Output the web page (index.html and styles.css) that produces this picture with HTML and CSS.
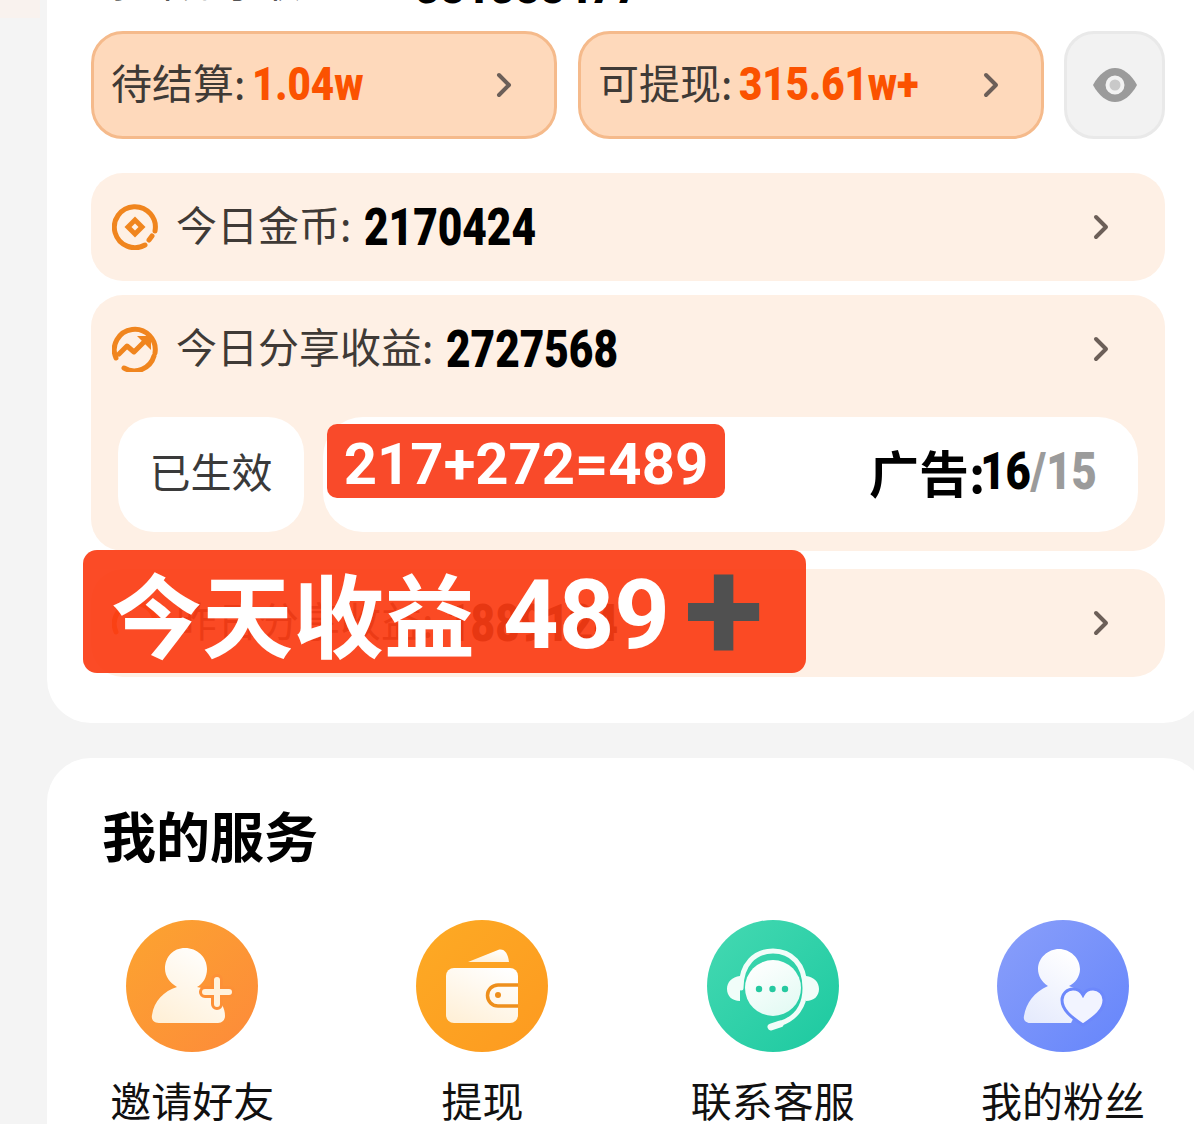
FILE: index.html
```html
<!DOCTYPE html>
<html lang="zh">
<head>
<meta charset="utf-8">
<title>我的服务</title>
<link rel="stylesheet" href="styles.css">
</head>
<body>
<div class="corner-tint"></div>
<section class="card earnings">
  <div class="total-line"><span class="total-label">累计分享收益:</span><span class="num total-num">381388477</span></div>
  <div class="pills">
    <div class="pill"><span class="pill-label">待结算:</span><span class="num pill-num">1.04w</span><svg class="chev" viewBox="0 0 16 26"><path d="M3 3l10 10L3 23"/></svg></div>
    <div class="pill"><span class="pill-label">可提现:</span><span class="num pill-num">315.61w+</span><svg class="chev" viewBox="0 0 16 26"><path d="M3 3l10 10L3 23"/></svg></div>
    <div class="eye-btn"><svg class="eye" viewBox="0 0 46 36"><path class="eye-shape" d="M1 18C7 7 15 1 23 1s16 6 22 17c-6 11-14 17-22 17S7 29 1 18z"/><circle class="eye-ring" cx="23" cy="18" r="7.500"/></svg></div>
  </div>
  <div class="row">
    <div class="row-head">
      <svg class="row-icon" viewBox="0 0 46 46"><path class="ring" d="M33 41A20.500 20.500 0 1 1 43 27"/><path class="ring" d="M40 32l-3 4"/><path class="diamond" d="M23 12.500L33.500 23 23 33.500 12.500 23z"/><path class="diamond-hole" d="M23 19.500l3.500 3.500-3.500 3.500-3.500-3.500z"/></svg>
      <span class="row-label">今日金币:</span><span class="num row-num">2170424</span>
      <svg class="chev" viewBox="0 0 16 26"><path d="M3 3l10 10L3 23"/></svg>
    </div>
  </div>
  <div class="row row-share">
    <div class="row-head">
      <svg class="row-icon" viewBox="0 0 46 46"><path class="ring" d="M4 32A20.500 20.500 0 1 1 43 27"/><path class="ring" d="M42 30A20.500 20.500 0 0 1 12 42"/><path class="trend" d="M7 28l8-8 7 6 10-10"/><path class="arrow" d="M25 10h14v14z"/></svg>
      <span class="row-label">今日分享收益:</span><span class="num row-num">2727568</span>
      <svg class="chev" viewBox="0 0 16 26"><path d="M3 3l10 10L3 23"/></svg>
    </div>
    <div class="status-line">
      <div class="status">已生效</div>
      <div class="ads">
        <span class="sum-tag">217+272=489</span>
        <span class="ads-label">广告:</span><span class="num ads-count"><span class="ads-num">16</span><span class="ads-total">/15</span></span>
      </div>
    </div>
  </div>
  <div class="row">
    <div class="row-head">
      <svg class="row-icon" viewBox="0 0 46 46"><path class="ring" d="M4 32A20.500 20.500 0 1 1 43 27"/></svg>
      <span class="row-label">昨日分享收益:</span><span class="num row-num">1889124</span>
      <svg class="chev" viewBox="0 0 16 26"><path d="M3 3l10 10L3 23"/></svg>
    </div>
  </div>
</section>
<div class="banner"><span class="banner-text">今天收益</span><span class="banner-num">489</span><span class="banner-plus">+</span></div>
<section class="card services">
  <h2 class="services-title">我的服务</h2>
  <div class="service-grid">
    <div class="service">
      <svg class="service-icon" viewBox="0 0 132 132">
        <defs>
          <linearGradient id="gOrange" x1="0" y1="0" x2="1" y2="1"><stop offset="0" stop-color="#fca430"/><stop offset="1" stop-color="#fd8a3a"/></linearGradient>
          <linearGradient id="gAmber" x1="0" y1="0" x2="1" y2="1"><stop offset="0" stop-color="#fdaa24"/><stop offset="1" stop-color="#fd9a20"/></linearGradient>
          <linearGradient id="gGreen" x1="0" y1="0" x2="1" y2="1"><stop offset="0" stop-color="#45d9b2"/><stop offset="1" stop-color="#1cc9a0"/></linearGradient>
          <linearGradient id="gBlue" x1="0" y1="0" x2="1" y2="1"><stop offset="0" stop-color="#8a9ffa"/><stop offset="1" stop-color="#6585fb"/></linearGradient>
          <linearGradient id="gCream" x1="0.8" y1="0" x2="0.2" y2="1"><stop offset="0" stop-color="#ffffff"/><stop offset="1" stop-color="#fff0d8"/></linearGradient>
          <linearGradient id="gMint" x1="0.2" y1="0" x2="0.8" y2="1"><stop offset="0" stop-color="#ffffff"/><stop offset="1" stop-color="#e2faf3"/></linearGradient>
          <linearGradient id="gIce" x1="0.7" y1="0" x2="0.2" y2="1"><stop offset="0" stop-color="#ffffff"/><stop offset="1" stop-color="#e6ebfd"/></linearGradient>
        </defs>
        <circle cx="66" cy="66" r="66" fill="url(#gOrange)"/>
        <path fill="url(#gCream)" d="M59 28c12 0 22 9 22 21 0 8-4 15-10 18 6 1 11 4 16 8 8 6 12 13 12 21 0 4-3 7-7 7H33c-5 0-8-3-7-8 2-14 12-24 25-28-7-4-12-11-12-18 0-12 8-21 20-21z"/>
        <path class="plus-cut" d="M91 60v24M79 72h24"/>
        <path class="plus-add" d="M91 60v24M79 72h24"/>
      </svg>
      <span class="service-name">邀请好友</span>
    </div>
    <div class="service">
      <svg class="service-icon" viewBox="0 0 132 132">
        <circle cx="66" cy="66" r="66" fill="url(#gAmber)"/>
        <path fill="url(#gCream)" d="M52 42l30-12c6-2 10 3 11 12z"/>
        <rect x="30" y="48" width="72" height="55" rx="8" fill="url(#gCream)"/>
        <path class="clasp" d="M102 65H82a10.500 10.500 0 0 0 0 21h20"/>
        <circle cx="82" cy="75" r="3" fill="#ee8f1c"/>
      </svg>
      <span class="service-name">提现</span>
    </div>
    <div class="service">
      <svg class="service-icon" viewBox="0 0 132 132">
        <circle cx="66" cy="66" r="66" fill="url(#gGreen)"/>
        <path fill="#f1fdf9" d="M33 56c-8 1-13 6-13 13s5 12 13 12zM99 56c8 1 13 6 13 13s-5 12-13 12z"/>
        <path class="band" d="M34 68C34 44 48 31 66 31s32 13 32 37c0 19-10 31-26 36"/>
        <circle cx="66" cy="68" r="28" fill="url(#gMint)"/>
        <path class="mic" d="M73 104l-9 3"/>
        <circle cx="52" cy="69" r="3.200" fill="#25c9a0"/><circle cx="65.500" cy="69" r="3.200" fill="#25c9a0"/><circle cx="78" cy="69" r="3.200" fill="#25c9a0"/>
      </svg>
      <span class="service-name">联系客服</span>
    </div>
    <div class="service">
      <svg class="service-icon" viewBox="0 0 132 132">
        <circle cx="66" cy="66" r="66" fill="url(#gBlue)"/>
        <path fill="url(#gIce)" d="M62 29c11 0 21 9 21 20 0 8-5 14-11 17 6 2 11 6 15 11L74 103H33c-4 0-7-3-6-7 2-13 10-24 24-30-6-4-10-10-10-17 0-11 10-20 21-20z"/>
        <path class="heart" d="M86 105c-12-8-21-15-21-25 0-6 5-11 11-11 4 0 8 2 10 6 2-4 6-6 10-6 6 0 11 5 11 11 0 10-9 17-21 25z"/>
      </svg>
      <span class="service-name">我的粉丝</span>
    </div>
  </div>
</section>
</body>
</html>
```
FILE: styles.css
```css
html, body { margin: 0; padding: 0; height: 1124px; overflow: hidden; }
body {
  position: relative;
  width: 1194px;
  background: #f4f4f4;
  font-family: "Noto Sans CJK SC", "Noto Sans", sans-serif;
  color: #3f3a36;
}
.corner-tint { position: absolute; left: 0; top: 0; width: 40px; height: 18px; background: #f9f2ee; }
.card { width: 1160px; margin-left: 47px; background: #fff; box-sizing: border-box; }
.num {
  display: inline-block;
  font-family: "Roboto", sans-serif;
  font-weight: 900;
  transform-origin: left center;
}

.earnings {
  margin-top: -40px;
  border-radius: 0 0 44px 44px;
  padding: 0 42px 46px 44px;
  display: flex;
  flex-direction: column;
}
.total-line { height: 71px; padding-left: 10px; display: flex; align-items: flex-end; overflow: hidden; box-sizing: border-box; padding-bottom: 25px; }
.total-label { font-size: 40px; line-height: 40px; width: 314px; color: #555; margin-bottom: 6px; flex: none; }
.total-num { font-size: 52px; line-height: 40px; color: #000; transform: scaleX(.83); }

.pills { display: flex; gap: 20px; height: 108px; }
.pill {
  width: 466px;
  box-sizing: border-box;
  background: #fed9bb;
  border: 3px solid #f5ba8b;
  border-radius: 32px;
  display: flex;
  align-items: center;
  padding: 0 42px 8px 17px;
}
.pill + .pill { margin-left: 1px; }
.pill-label { font-size: 41px; line-height: 50px; }
.pill-num { font-size: 46px; line-height: 50px; color: #fb5200; margin: 5px 0 0 7px; transform: scaleX(.875); }
.chev { width: 16px; height: 26px; margin-left: auto; flex: none; }
.pill .chev { margin-top: 8px; }
.chev path { fill: none; stroke: #6c5f58; stroke-width: 4; stroke-linecap: round; stroke-linejoin: round; }
.eye-btn {
  flex: 1;
  box-sizing: border-box;
  background: #f2f2f2;
  border: 3px solid #e9e9e9;
  border-radius: 30px;
  display: flex;
  align-items: center;
  justify-content: center;
}
.eye { width: 46px; height: 36px; }
.eye-shape { fill: #9b9b9b; }
.eye-ring { fill: #c9c9c9; stroke: #f2f2f2; stroke-width: 4; }

.row { background: #fef0e5; border-radius: 32px; margin-top: 14px; }
.pills + .row { margin-top: 34px; }
.row-share { padding-bottom: 19px; margin-bottom: 4px; }
.row-head { height: 108px; display: flex; align-items: center; padding: 0 56px 0 21px; box-sizing: border-box; }
.row-icon { width: 46px; height: 46px; flex: none; margin-right: 18px; }
.ring { fill: none; stroke: #f0851e; stroke-width: 5; stroke-linecap: round; }
.diamond { fill: #f0851e; }
.diamond-hole { fill: #fef0e5; }
.trend { fill: none; stroke: #f0851e; stroke-width: 5; stroke-linejoin: round; stroke-linecap: round; }
.arrow { fill: #f0851e; }
.row-label { font-size: 41px; line-height: 50px; margin-bottom: 8px; }
.row-num { font-size: 52px; line-height: 50px; color: #000; margin: 1px 0 0 13px; transform: scaleX(.815); }

.status-line { display: flex; gap: 19px; padding: 0 27px; margin-top: 14px; }
.status {
  width: 186px;
  height: 115px;
  box-sizing: border-box;
  padding-bottom: 9px;
  background: #fff;
  border-radius: 36px;
  display: flex;
  align-items: center;
  justify-content: center;
  font-size: 41px;
  color: #3a3a3a;
}
.ads {
  flex: 1;
  height: 115px;
  box-sizing: border-box;
  padding: 0 41px 7px 0;
  background: #fff;
  border-radius: 40px;
  position: relative;
  display: flex;
  align-items: center;
  justify-content: flex-end;
}
.sum-tag {
  position: absolute;
  left: 4px;
  top: 7px;
  width: 398px;
  height: 74px;
  background: #f94a2a;
  border-radius: 10px;
  color: #fff;
  font-family: "Roboto", sans-serif;
  font-weight: 700;
  font-size: 58px;
  line-height: 80px;
  text-align: center;
}
.ads-label { font-size: 50px; font-weight: 700; color: #000; line-height: 60px; margin-right: -27px; }
.ads-count { font-size: 52px; line-height: 60px; transform: scaleX(.84); transform-origin: right center; margin-top: 2px; }
.ads-num { color: #000; }
.ads-total { color: #9b9b9b; }

.banner {
  position: absolute;
  left: 83px;
  top: 550px;
  width: 723px;
  height: 123px;
  box-sizing: border-box;
  padding-left: 28px;
  background: rgba(251, 60, 19, 0.92);
  border-radius: 14px;
  display: flex;
  align-items: center;
  color: #fff;
  overflow: hidden;
}
.banner-text { font-size: 91px; font-weight: 700; line-height: 123px; }
.banner-num { font-family: "Roboto", sans-serif; font-size: 97px; font-weight: 700; line-height: 123px; margin: 8px 0 0 28px; }
.banner-plus { font-family: "Roboto", sans-serif; font-size: 146px; font-weight: 700; line-height: 123px; color: #505050; margin: 0 0 0 14px; }

.services { margin-top: 35px; border-radius: 44px 44px 0 0; height: 400px; padding-top: 46px; }
.services-title { margin: 0 0 54px 55px; font-size: 54px; line-height: 62px; font-weight: 700; color: #000; }
.service-grid { display: grid; grid-template-columns: repeat(4, 290.300px); }
.service { display: flex; flex-direction: column; align-items: center; }
.service-icon { width: 132px; height: 132px; display: block; }
.service-name { font-size: 41px; line-height: 50px; margin-top: 22px; color: #111; white-space: nowrap; }

.plus-cut { fill: none; stroke: #fd9036; stroke-width: 12; stroke-linecap: round; }
.plus-add { fill: none; stroke: #fff2dc; stroke-width: 6; stroke-linecap: round; }
.clasp { fill: none; stroke: #ee8f1c; stroke-width: 3.500; }
.band { fill: none; stroke: #f1fdf9; stroke-width: 5; stroke-linecap: round; }
.mic { fill: none; stroke: #f1fdf9; stroke-width: 7; stroke-linecap: round; }
.heart { fill: #f2f4ff; stroke: #6d88fb; stroke-width: 3; }
```
